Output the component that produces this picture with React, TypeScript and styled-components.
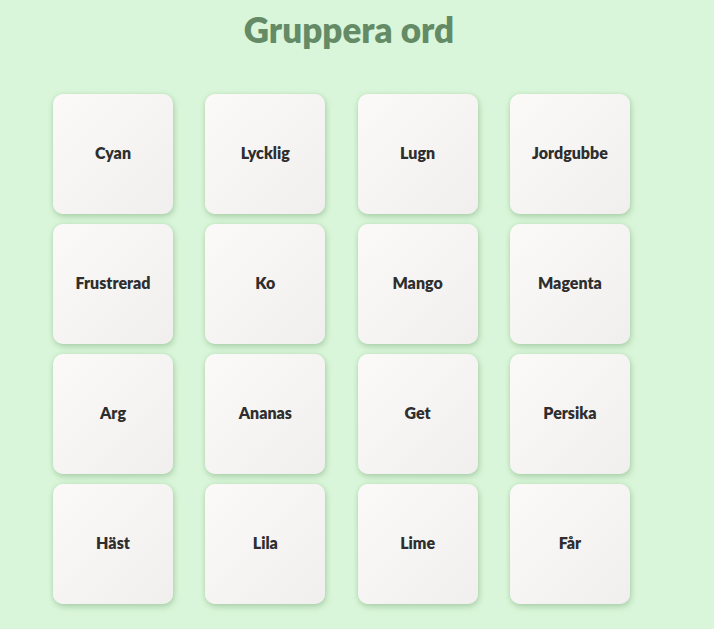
import React from "react";
import styled, { createGlobalStyle } from "styled-components";

const Global = createGlobalStyle`
  html, body {
    margin: 0;
    padding: 0;
    background: #daf6da;
  }
  body {
    font-family: Lato, "Noto Sans", sans-serif;
  }
`;

const Page = styled.main`
  width: 698px;
  min-height: 629px;
  display: flex;
  flex-direction: column;
  box-sizing: border-box;
  padding-top: 8px;
`;

const Title = styled.h1`
  margin: 0;
  text-align: center;
  font-size: 35px;
  line-height: 43px;
  font-weight: 800;
  color: #648b66;
`;

const Grid = styled.div`
  margin-top: 43px;
  margin-left: 53px;
  display: grid;
  grid-template-columns: repeat(4, 120px);
  column-gap: 32.3px;
  row-gap: 10px;
`;

const Card = styled.button`
  width: 120px;
  height: 120px;
  border: none;
  border-radius: 10px;
  background: linear-gradient(135deg, #fbfaf8 0%, #f0efee 100%);
  box-shadow: 1px 3px 6px rgba(100, 150, 100, 0.35), 0 0 4px rgba(150, 200, 150, 0.3);
  display: flex;
  align-items: center;
  justify-content: center;
  font-family: Lato, "Noto Sans", sans-serif;
  font-size: 16px;
  font-weight: 800;
  color: #2e2e2e;
  padding: 0 0 4px 0;
  cursor: pointer;
`;

const words = [
  "Cyan", "Lycklig", "Lugn", "Jordgubbe",
  "Frustrerad", "Ko", "Mango", "Magenta",
  "Arg", "Ananas", "Get", "Persika",
  "Häst", "Lila", "Lime", "Får",
];

export default function App() {
  return (
    <>
      <Global />
      <Page>
        <Title>Gruppera ord</Title>
        <Grid>
          {words.map((w) => (
            <Card key={w}>{w}</Card>
          ))}
        </Grid>
      </Page>
    </>
  );
}
